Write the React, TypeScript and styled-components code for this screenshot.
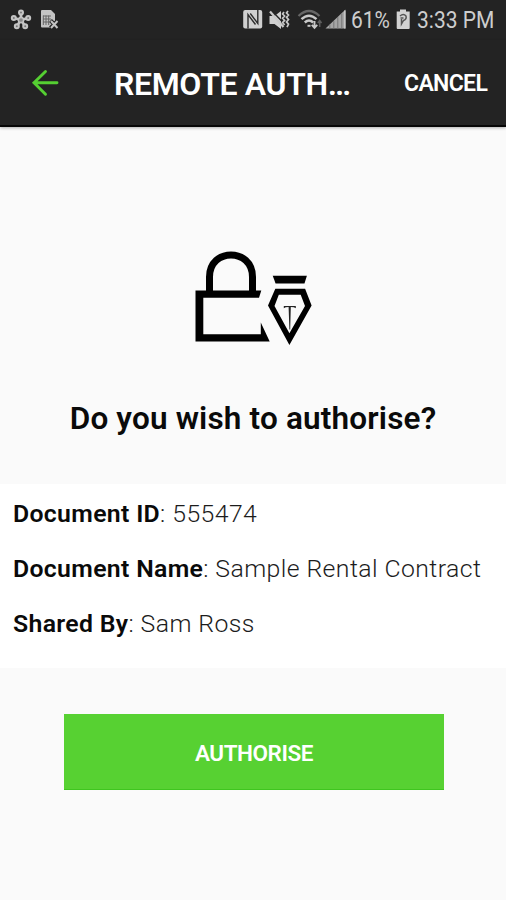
import React from 'react';
import styled, { createGlobalStyle } from 'styled-components';

const GlobalStyle = createGlobalStyle`
  * { box-sizing: border-box; }
  body { margin: 0; background: #fafafa; font-family: Roboto, "Liberation Sans", sans-serif; }
`;

const Screen = styled.div`
  width: 506px;
  height: 900px;
  display: flex;
  flex-direction: column;
  overflow: hidden;
  background: #fafafa;
`;

const StatusBar = styled.div`
  height: 40px;
  flex: none;
  display: flex;
  justify-content: space-between;
  background: #232323;
`;

const StatusText = styled.span<{ $width: number }>`
  width: ${(p) => p.$width}px;
  flex: none;
  font-size: 24px;
  line-height: 41px;
  color: #cdcdcd;
  white-space: nowrap;
  transform: scaleX(0.875);
  transform-origin: left center;
`;

const StatusGroup = styled.div`
  display: flex;
`;

const AppBar = styled.header`
  height: 87px;
  flex: none;
  display: flex;
  align-items: center;
  background: #232323;
  border-bottom: 2px solid #060606;
  box-shadow: 0 1px 3px rgba(0, 0, 0, 0.3);
`;

const BackButton = styled.button`
  width: 114px;
  height: 85px;
  padding: 0;
  border: 0;
  background: none;
  display: flex;
`;

const Title = styled.h1`
  flex: 1;
  margin: 0;
  padding-top: 3px;
  font-size: 32px;
  line-height: 38px;
  font-weight: 600;
  letter-spacing: -0.35px;
  color: #fff;
  white-space: nowrap;
`;

const CancelButton = styled.button`
  width: 102px;
  flex: none;
  padding: 2px 0 0;
  border: 0;
  background: none;
  text-align: left;
  font: 600 23px/28px Roboto, sans-serif;
  letter-spacing: -0.65px;
  color: #fff;
`;

const Prompt = styled.section`
  height: 357px;
  flex: none;
  display: flex;
  flex-direction: column;
  align-items: center;
`;

const Emblem = styled.svg`
  margin: 108px 2px 0 0;
  flex: none;
`;

const Question = styled.h2`
  margin: 44px 0 0;
  font-size: 31.5px;
  line-height: 40px;
  font-weight: 600;
  letter-spacing: 0.17px;
  color: #0a0a0a;
  white-space: nowrap;
`;

const Details = styled.dl`
  height: 184px;
  flex: none;
  margin: 0;
  padding: 2.2px 13px 0;
  background: #fff;
`;

const DetailRow = styled.div`
  height: 55.2px;
  display: flex;
  align-items: center;
  font-size: 24.8px;
  line-height: 30px;
  color: #1c1c1c;
  white-space: pre;
`;

const Label = styled.dt`
  font-weight: 600;
  letter-spacing: 0.33px;
  color: #0a0a0a;
`;

const Value = styled.dd`
  margin: 0;
  font-weight: 300;
  letter-spacing: 0.42px;
`;

const AuthoriseButton = styled.button`
  width: 380px;
  height: 76px;
  flex: none;
  margin: 46px 0 0 64px;
  padding: 2px 0 0;
  border: 0;
  border-bottom: 1px solid #3fc51f;
  background: #57d132;
  font: 600 22.5px/28px Roboto, sans-serif;
  letter-spacing: -0.45px;
  color: #fff;
`;

const details = [
  { label: 'Document ID', value: '555474' },
  { label: 'Document Name', value: 'Sample Rental Contract' },
  { label: 'Shared By', value: 'Sam Ross' },
];

const NotificationIcons = () => (
  <svg width="70" height="40" fill="none" stroke="#c4c4c4">
    <path d="M21 20V13M21 20l-7-2M21 20l7-2M21 20l-4 6M21 20l4 6" strokeWidth="2.8" />
    <g strokeWidth="2" fill="#777">
      <circle cx="21" cy="12.5" r="2" />
      <circle cx="13.8" cy="18" r="2" />
      <circle cx="28.2" cy="18" r="2" />
      <circle cx="16.8" cy="26.3" r="2" />
      <circle cx="25.2" cy="26.3" r="2" />
    </g>
    <circle cx="21" cy="20" r="2.6" fill="#888" strokeWidth="1.5" />
    <path d="M42 10h9l4 4v7l-4 6.5h-9q-1 0-1-1V11q0-1 1-1z" fill="#c4c4c4" stroke="none" />
    <path d="M43 16h8M43 19h8M43 22h6M43.3 15.5v9.5M46 15.5v9.5M48.7 15.5v9.5" stroke="#666" strokeWidth="1" />
    <path d="M50.5 20.5l7.5 7.5M58 20.5L50.5 28" stroke="#232323" strokeWidth="4" />
    <path d="M51 21l6.5 7M57.5 21L51 28" strokeWidth="2" />
  </svg>
);

const SignalIcons = () => (
  <svg width="111" height="40" viewBox="240 0 111 40" fill="none" stroke="#c8c8c8">
    <rect x="243.2" y="10" width="19" height="18.5" rx="2" fill="#d0d0d0" stroke="none" />
    <path d="M248 28.5V14.5l7.5 10M257.8 10v13.5l-7.5-10" stroke="#2c2c2c" strokeWidth="1.4" />
    <path d="M269.5 16h5l6.5-5v18l-6.5-5h-5z" fill="#cfcfcf" stroke="none" />
    <path d="M271.5 10.5l14 14.5" stroke="#232323" strokeWidth="1.4" />
    <path d="M270 11.5l13.5 15.5" strokeWidth="2.2" />
    <path d="M284 12l-1.4 2 2 2-2 2.2 2 2.2-2 2.2 2 2.4M288 11l-1.5 2 2 2-2 2.3 2 2.3-2 2.3 2 2.3-1.5 3" strokeWidth="1.7" />
    <path d="M298.5 16q10.5-10 21 0" stroke="#666" strokeWidth="2.2" />
    <path d="M301.5 19.2q7.5-7 15 0M304.8 22.5q4.2-4 8.4 0" strokeWidth="2.5" />
    <path d="M309 24.8v2" strokeWidth="3" />
    <path d="M314.5 21v6.5M311.8 24.8l2.7 3 2.7-3" strokeWidth="1.9" />
    <path d="M319.7 27v-6M317.8 23l1.9-2.5 1.9 2.5" stroke="#5d5d5d" strokeWidth="1.5" />
    <path d="M325.5 28.5L345.5 9.5v19z" fill="#a6a6a6" stroke="none" />
    <path d="M329.8 28.5v-4M333.8 28.5v-7.5M337.8 28.5v-11.5M341.8 28.5v-15" stroke="#777" strokeWidth="1" />
    <path d="M344.8 28.5V10.5" strokeWidth="1.5" />
  </svg>
);

const BatteryIcon = () => (
  <svg width="23" height="40" viewBox="394 0 23 40">
    <path d="M400 9.5h6v2h3.7V28q0 1-1 1h-11q-1 0-1-1V11.5h3.3z" fill="#d2d2d2" />
    <path d="M400 16q3.5-3 6 0 1 3-2.5 4.5l-2 3.5v-5M400.5 18h3" fill="none" stroke="#555" strokeWidth="1.5" />
  </svg>
);

export default function App() {
  return (
    <Screen>
      <GlobalStyle />
      <StatusBar>
        <NotificationIcons />
        <StatusGroup>
          <SignalIcons />
          <StatusText $width={43}>61%</StatusText>
          <BatteryIcon />
          <StatusText $width={89.5}>3:33 PM</StatusText>
        </StatusGroup>
      </StatusBar>
      <AppBar>
        <BackButton aria-label="Back">
          <svg width="90" height="85" viewBox="0 40 90 85" fill="none" stroke="#55cf32" strokeWidth="2.9" strokeLinecap="round">
            <path d="M57 82.8H34M45.5 71.5L34 82.8l11.5 11.4" />
          </svg>
        </BackButton>
        <Title>REMOTE AUTH…</Title>
        <CancelButton>CANCEL</CancelButton>
      </AppBar>
      <Prompt>
        <Emblem width="145" height="120" viewBox="0 0 145 120">
          <path d="M29.5 56V42C29.5 12.5 72.5 12.5 72.5 42V56" fill="none" stroke="#000" strokeWidth="7" />
          <path d="M15.5 55.5h65.8l-2.3 7.3H23.3v36.4h57.5V87.5l8.9 19H15.5z" />
          <path d="M92.7 40.7h34.2l-2.4 7.8H95.6z" />
          <path d="M95.3 53.7h29.8l6.5 16.8-22.2 39.4L88 70.5zM98.8 59.8l-4.3 11.1 14.9 27.4 15.6-27.4-4.3-11.1z" fillRule="evenodd" />
          <path d="M103.8 71h12v2.3q-1.5-1.2-5-1.2l-.6 22.5h-.8l-.8-22.5q-3.4 0-4.8 1.2z" fill="#222" />
        </Emblem>
        <Question>Do you wish to authorise?</Question>
      </Prompt>
      <Details>
        {details.map(({ label, value }) => (
          <DetailRow key={label}>
            <Label>{label}</Label>
            <Value>: {value}</Value>
          </DetailRow>
        ))}
      </Details>
      <AuthoriseButton>AUTHORISE</AuthoriseButton>
    </Screen>
  );
}
